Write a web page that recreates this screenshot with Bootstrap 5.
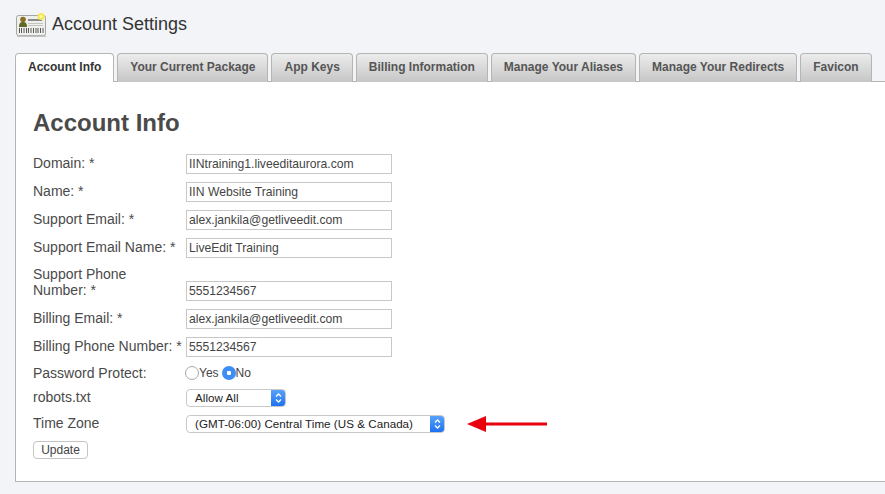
<!DOCTYPE html>
<html lang="en"><head><meta charset="utf-8"><title>Account Settings</title>
<link href="https://cdn.jsdelivr.net/npm/bootstrap@5.3.0/dist/css/bootstrap.min.css" rel="stylesheet">
<style>
html,body{height:494px;overflow:hidden}
body{background:#f2f4f8;font-family:"Liberation Sans",Arial,sans-serif;color:#4a4a4a;font-size:14px;padding:13px 0 0 15px;width:885px}
.hdr{height:24px;margin-bottom:16px;gap:5px;padding-left:1px}
.hdr h1{font-size:18px;line-height:24px;margin:0 0 2px;color:#333;font-weight:400}
.tabsbar{height:29px;gap:3px;flex-wrap:nowrap;margin-right:-10px}
.tabsbar .nav-link{height:29px;padding:0 12px;line-height:27px;font-size:12px;font-weight:700;color:#555;border:1px solid #b5b5b5;border-bottom:0;border-radius:4px 4px 0 0;background:linear-gradient(#ececec,#c6c6c6);white-space:nowrap}
.tabsbar .nav-link.active{background:#fff;color:#333;position:relative;z-index:2}
.panel-box{background:#fff;border:1px solid #b5b5b5;border-right:0;height:401px;margin-top:-1px;padding:25px 17px 0}
.panel-box h2{font-size:24px;font-weight:700;line-height:32px;color:#4a4a4a;margin:0 0 15px}
.frow{display:flex;align-items:flex-end;margin-bottom:8px}
.flabel{width:153px;flex:none;line-height:16px;padding-bottom:3px}
.tinput{width:206px;height:20px;border:1px solid #c8c8c8;padding:0 2px;font:12.15px "Liberation Sans",Arial,sans-serif;color:#444;background:#fff;outline:0;border-radius:0}
.radrow{height:16px;align-items:center}
.radrow .flabel{padding:0;line-height:16px;width:152px}
.rad{width:14px;height:14px;border-radius:50%;border:1px solid #a8a8a8;background:#fff;flex:none}
.rad.on{border:0;background:radial-gradient(circle,#fff 0 2px,#3c8ef5 2.5px)}
.rtext{font-size:12px;color:#444}
.yes-gap{margin-left:3px}
.selbox{height:18px;border:1px solid #c9c9c9;border-radius:4px;background:#fff;display:flex;align-items:center;justify-content:space-between;padding-left:8px;font-size:11.6px;letter-spacing:.04px;color:#222;overflow:hidden}
.selcaret{width:15px;height:18px;margin-right:-1px;background:linear-gradient(#5aa5fb,#1a6ff0);display:flex;align-items:center;justify-content:center;flex:none}
.s1{width:100px}.s2{width:259px}
.selrow{margin-bottom:8px;align-items:center;height:18px}
.selrow .flabel{padding:0;line-height:18px;margin-top:-2px}
.arrowmark{margin-left:22px;flex:none}
.upbtn{height:18px;width:55px;padding:0;font-size:12px;line-height:15px;color:#444;background:#fff;border:1px solid #c4c4c4;border-radius:4px;display:block;margin-top:2px}
</style></head><body>
<div class="hdr d-flex align-items-center">
<svg width="31" height="25" viewBox="0 0 31 25"><rect x=".5" y="2.500" width="29" height="20" rx="2" fill="#efefec" stroke="#a5a5a5"/><rect x="1" y="22.500" width="29" height="1.500" fill="#c2c2c2"/><circle cx="7" cy="6.500" r="2.800" fill="#8a6d2b"/><path d="M3 14c0-4 1.500-5 4-5s4 1 4 5z" fill="#5f6a26"/><rect x="12" y="6" width="14" height="2" fill="#8a8a8a"/><rect x="12" y="10" width="15" height="1" fill="#c4c4c4"/><rect x="12" y="12" width="15" height="1" fill="#c4c4c4"/><path d="M3.500 15v5M5.500 15v5M8 15v5M10.500 15v5M12.500 15v5M15 15v5M17.500 15v5M20 15v5M22 15v5M24.500 15v5M27 15v5" stroke="#5a5a5a" stroke-width="1"/><circle cx="25" cy="3.500" r="3.500" fill="#f6e94e"/><circle cx="25" cy="3.500" r="1.500" fill="#fdfbb0"/></svg>
<h1>Account Settings</h1>
</div>
<ul class="nav tabsbar">
<li class="nav-item"><a class="nav-link active" href="#">Account Info</a></li>
<li class="nav-item"><a class="nav-link" href="#">Your Current Package</a></li>
<li class="nav-item"><a class="nav-link" href="#">App Keys</a></li>
<li class="nav-item"><a class="nav-link" href="#">Billing Information</a></li>
<li class="nav-item"><a class="nav-link" href="#">Manage Your Aliases</a></li>
<li class="nav-item"><a class="nav-link" href="#">Manage Your Redirects</a></li>
<li class="nav-item"><a class="nav-link" href="#">Favicon</a></li>
</ul>
<div class="panel-box">
<h2>Account Info</h2>
<form>
<div class="frow"><div class="flabel">Domain: *</div><input class="tinput" value="IINtraining1.liveeditaurora.com"></div>
<div class="frow"><div class="flabel">Name: *</div><input class="tinput" value="IIN Website Training"></div>
<div class="frow"><div class="flabel">Support Email: *</div><input class="tinput" value="alex.jankila@getliveedit.com"></div>
<div class="frow"><div class="flabel">Support Email Name: *</div><input class="tinput" value="LiveEdit Training"></div>
<div class="frow"><div class="flabel">Support Phone<br>Number: *</div><input class="tinput" value="5551234567"></div>
<div class="frow"><div class="flabel">Billing Email: *</div><input class="tinput" value="alex.jankila@getliveedit.com"></div>
<div class="frow"><div class="flabel">Billing Phone Number: *</div><input class="tinput" value="5551234567"></div>
<div class="frow radrow"><div class="flabel">Password Protect:</div><span class="rad"></span><span class="rtext">Yes</span><span class="rad on yes-gap"></span><span class="rtext">No</span></div>
<div class="frow selrow"><div class="flabel">robots.txt</div><div class="selbox s1">Allow All<span class="selcaret"><svg width="7" height="12" viewBox="0 0 7 12"><path d="M1 4.500 3.500 2 6 4.500M1 7.500 3.500 10 6 7.500" fill="none" stroke="#fff" stroke-width="1.300"/></svg></span></div></div>
<div class="frow selrow"><div class="flabel">Time Zone</div><div class="selbox s2">(GMT-06:00) Central Time (US &amp; Canada)<span class="selcaret"><svg width="7" height="12" viewBox="0 0 7 12"><path d="M1 4.500 3.500 2 6 4.500M1 7.500 3.500 10 6 7.500" fill="none" stroke="#fff" stroke-width="1.300"/></svg></span></div>
<svg class="arrowmark" width="80" height="16" viewBox="0 0 80 16"><path d="M0 8 19 0v6.500h61v3H19V16z" fill="#e8000d"/></svg></div>
<button type="button" class="upbtn">Update</button>
</form>
</div>
<script src="https://cdn.jsdelivr.net/npm/bootstrap@5.3.0/dist/js/bootstrap.bundle.min.js"></script>
</body></html>
